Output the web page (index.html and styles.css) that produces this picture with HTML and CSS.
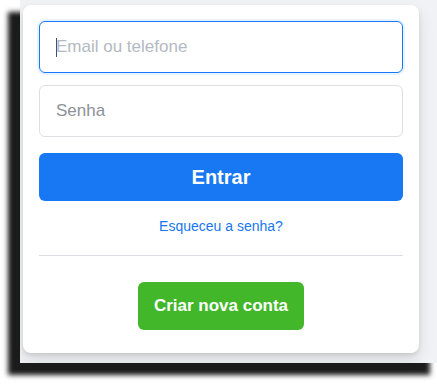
FILE: index.html
```html
<!DOCTYPE html>
<html lang="pt">
<head>
<meta charset="utf-8">
<title>Entrar</title>
<link rel="stylesheet" href="styles.css">
</head>
<body>
<div class="shot">
  <div class="card">
    <div class="field field-focus">
      <span class="caret"></span>
      <span class="ph ph-light">Email ou telefone</span>
    </div>
    <div class="field field-second">
      <span class="ph">Senha</span>
    </div>
    <button class="btn-login">Entrar</button>
    <a class="forgot" href="#">Esqueceu a senha?</a>
    <div class="divider"></div>
    <div class="create-row">
      <button class="btn-create">Criar nova conta</button>
    </div>
  </div>
</div>
</body>
</html>
```

FILE: styles.css
```css
html, body {
  margin: 0;
  padding: 0;
  background: #ffffff;
  overflow: hidden;
}
body {
  width: 437px;
  height: 385px;
  font-family: "Liberation Sans", Arial, Helvetica, sans-serif;
}
.shot {
  margin-left: 20px;
  width: 422px;
  box-sizing: border-box;
  padding: 5px 0 10px 3px;
  background: #f0f2f5;
  box-shadow: -12px 12px 5px #1c1c1c;
}
.card {
  width: 396px;
  box-sizing: border-box;
  background: #ffffff;
  border-radius: 8px;
  padding: 16px 16px 23px;
  box-shadow: 0 2px 4px rgba(0,0,0,0.1), 0 8px 16px rgba(0,0,0,0.1);
  display: flex;
  flex-direction: column;
}
.field {
  height: 52px;
  box-sizing: border-box;
  border: 1px solid #dddfe2;
  border-radius: 6px;
  padding: 0 16px;
  display: flex;
  align-items: center;
  font-size: 17px;
}
.field-focus {
  border-color: #1877f2;
  box-shadow: 0 0 0 2px #e7f3ff;
}
.field-second {
  margin-top: 12px;
}
.caret {
  width: 1px;
  height: 19px;
  background: #3e4f8c;
  margin-right: -1px;
}
.ph {
  color: #8d9198;
}
.ph-light {
  color: #b3b9c2;
}
.btn-login {
  margin-top: 16px;
  height: 48px;
  border: none;
  border-radius: 6px;
  background: #1877f2;
  color: #ffffff;
  font-family: inherit;
  font-size: 20px;
  font-weight: bold;
  padding: 0;
}
.forgot {
  margin-top: 16px;
  align-self: center;
  font-size: 14px;
  line-height: 19px;
  color: #1877f2;
  text-decoration: none;
}
.divider {
  margin-top: 19px;
  border-top: 1px solid #dadde1;
}
.create-row {
  margin-top: 26px;
  display: flex;
  justify-content: center;
}
.btn-create {
  height: 48px;
  border: none;
  border-radius: 6px;
  background: #42b72a;
  color: #ffffff;
  font-family: inherit;
  font-size: 17px;
  font-weight: bold;
  padding: 0 16px;
}
```
